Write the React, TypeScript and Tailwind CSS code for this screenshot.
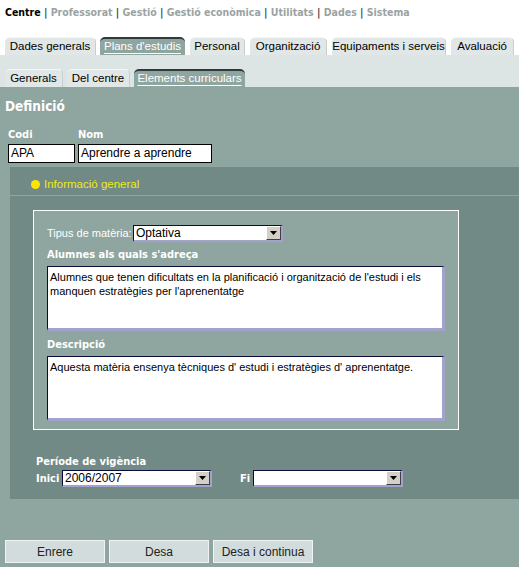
import React from "react";

const nav = ["Professorat", "Gestió", "Gestió econòmica", "Utilitats", "Dades", "Sistema"];

const mainTabs = [
  { label: "Dades generals", w: "w-[91px]" },
  { label: "Plans d'estudis", w: "w-[85px]", active: true },
  { label: "Personal", w: "w-[55px]" },
  { label: "Organització", w: "w-[77px]" },
  { label: "Equipaments i serveis", w: "w-[114px]" },
  { label: "Avaluació", w: "w-[63px]" },
];

const subTabs = [
  { label: "Generals", w: "w-[58px]" },
  { label: "Del centre", w: "w-[63px]" },
  { label: "Elements curriculars", w: "w-[111px]", active: true },
];

type TabProps = { label: string; w: string; active?: boolean };

const Tab = ({ label, w, active }: TabProps) => (
  <div
    className={`${w} h-[18px] flex items-center justify-center rounded-t-[5px] text-[11.5px] leading-none whitespace-nowrap ${
      active
        ? "bg-[#8fa5a0] text-white border-t-2 border-[#2f3b3a]"
        : "bg-[#e1e7e7] text-black border-t border-r border-t-[#f4f7f7] border-r-[#c5cfcf]"
    }`}
  >
    <span className={active ? "underline decoration-white underline-offset-[3px]" : ""}>{label}</span>
  </div>
);

const Select = ({ value, w }: { value: string; w: string }) => (
  <div className={`${w} h-[17px] shrink-0 flex bg-white border-t border-l border-[#0c0c3a] border-b-2 border-r-2 border-b-[#a2a2cc] border-r-[#a2a2cc] font-normal font-['Liberation_Sans',sans-serif]`}>
    <div className="flex-1 px-[2px] text-[12px] leading-[15px] text-black">{value}</div>
    <div className="w-[15px] h-[14px] bg-[#d4d0c8] border border-t-white border-l-white border-b-[#404040] border-r-[#404040] flex items-center justify-center">
      <svg width="7" height="4" viewBox="0 0 7 4">
        <path d="M0 0h7L3.5 4z" fill="#000" />
      </svg>
    </div>
  </div>
);

const TextBox = ({ children }: { children: React.ReactNode }) => (
  <div className="w-[398px] h-[65px] bg-white border-t border-l border-[#0c0c3a] border-b-[3px] border-r-[3px] border-b-[#a2a2cc] border-r-[#a2a2cc] px-[2px] pt-[3px] text-[11px] leading-[14px] text-black font-['Liberation_Sans',sans-serif]">
    {children}
  </div>
);

const Button = ({ label }: { label: string }) => (
  <button className="w-[100px] h-[23px] bg-[#d3dcdc] border border-[#eef3f3] text-[12px] text-[#222] font-['Liberation_Sans',sans-serif]">
    {label}
  </button>
);

const bold = "text-white font-bold text-[11px] leading-[14px] font-['DejaVu_Sans_Condensed',sans-serif]";

export default function App() {
  return (
    <div className="w-[519px] h-[567px] flex flex-col bg-[#8fa5a0] font-['Liberation_Sans',sans-serif] overflow-hidden">
      <div className="bg-white h-[37px] pl-[5px] pt-[5px] text-[10.5px] font-bold font-['DejaVu_Sans_Condensed',sans-serif] leading-[14px] whitespace-nowrap">
        <span className="text-black">Centre</span>
        {nav.map((n) => (
          <span key={n}>
            <span className="text-[#444]"> | </span>
            <span className="text-[#9aa3a3]">{n}</span>
          </span>
        ))}
      </div>

      <div className="bg-white flex items-end pl-[5px] gap-[5px]">
        {mainTabs.map((t, i) => (
          <div key={t.label} className={i === 1 ? "-ml-[1px]" : ""}>
            <Tab {...t} />
          </div>
        ))}
      </div>

      <div className="bg-[#dde4e4] pt-[14px] pl-[5px] flex items-end gap-[4px]">
        {subTabs.map((t) => (
          <Tab key={t.label} {...t} />
        ))}
      </div>

      <div className="flex-1 flex flex-col">
        <div className="pl-[5px] pt-[11px] text-white font-bold text-[13.5px] leading-[16px] font-['DejaVu_Sans_Condensed',sans-serif]">
          Definició
        </div>

        <div className="flex gap-[3px] pl-[8px] pt-[14px]">
          <div className="flex flex-col">
            <span className={`${bold} mb-[2px]`}>Codi</span>
            <div className="w-[67px] h-[19px] bg-white border border-black text-[12px] leading-[17px] px-[2px] text-black">APA</div>
          </div>
          <div className="flex flex-col">
            <span className={`${bold} mb-[2px]`}>Nom</span>
            <div className="w-[134px] h-[19px] bg-white border border-black text-[12px] leading-[17px] px-[2px] text-black">Aprendre a aprendre</div>
          </div>
        </div>

        <div className="ml-[10px] mt-[4px] bg-[#728a85] h-[332px] flex flex-col">
          <div className="h-[29px] border-b border-[#8fa5a0] flex items-start pt-[10px] pl-[21px] gap-[4px] text-[11.5px] leading-[14px] text-[#ecea1a]">
            <span className="w-[9px] h-[9px] mt-[3px] rounded-full bg-[#ffe500]" />
            <span>Informació general</span>
          </div>

          <div className="ml-[23px] mt-[14px] w-[426px] h-[220px] border border-white bg-[#8fa5a0] pl-[13px] pt-[14px] flex flex-col">
            <div className="flex items-center">
              <span className="text-white text-[11px] w-[86px] whitespace-nowrap">Tipus de matèria:</span>
              <Select value="Optativa" w="w-[150px]" />
            </div>
            <div className={`mt-[6px] ${bold}`}>Alumnes als quals s'adreça</div>
            <div className="mt-[4px]">
              <TextBox>
                Alumnes que tenen dificultats en la planificació i organització de l'estudi i els
                <br />
                manquen estratègies per l'aprenentatge
              </TextBox>
            </div>
            <div className={`mt-[7px] ${bold}`}>Descripció</div>
            <div className="mt-[4px]">
              <TextBox>Aquesta matèria ensenya tècniques d' estudi i estratègies d' aprenentatge.</TextBox>
            </div>
          </div>

          <div className={`pl-[26px] pt-[25px] ${bold}`}>Període de vigència</div>
          <div className={`pl-[26px] mt-[1px] flex items-center ${bold}`}>
            <span className="w-[26px]">Inici</span>
            <Select value="2006/2007" w="w-[150px]" />
            <span className="ml-[28px] w-[13px]">Fi</span>
            <Select value="" w="w-[150px]" />
          </div>
        </div>

        <div className="flex gap-[4px] pl-[5px] mt-[41px]">
          <Button label="Enrere" />
          <Button label="Desa" />
          <Button label="Desa i continua" />
        </div>
      </div>
    </div>
  );
}
